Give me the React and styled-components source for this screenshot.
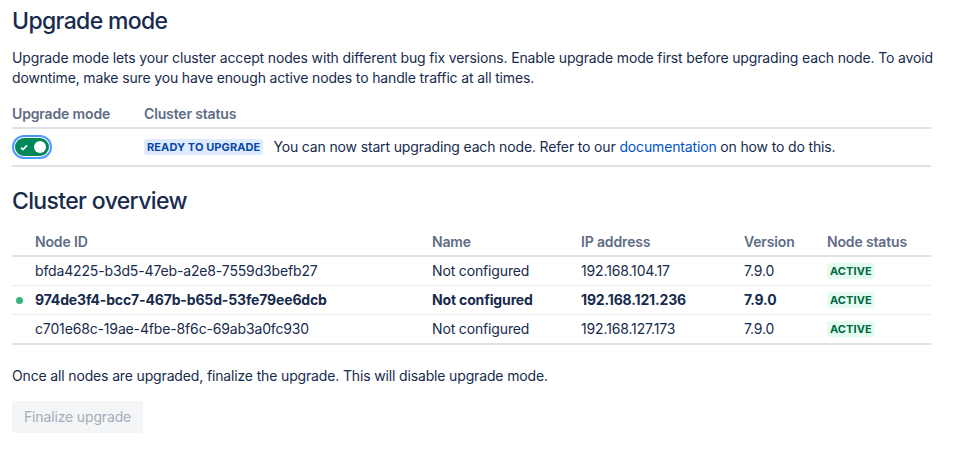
import styled, { createGlobalStyle } from "styled-components";

const GlobalStyle = createGlobalStyle`
  body {
    margin: 0;
    background: #fff;
    font-family: Inter, "Noto Sans", sans-serif;
    color: #172b4d;
    font-size: 14px;
    line-height: 20px;
    letter-spacing: -0.15px;
  }
`;

const Page = styled.div`
  padding: 7px 12px 20px;
`;

const Heading = styled.h2`
  margin: ${(p) => p.$margin || "0"};
  font-size: 23px;
  line-height: 28px;
  font-weight: 500;
  color: #172b4d;
  letter-spacing: -0.65px;
`;

const Text = styled.p`
  margin: ${(p) => p.$margin || "0"};
  max-width: 935px;
`;

const Link = styled.a`
  color: #0052cc;
  text-decoration: none;
`;

const Table = styled.div`
  width: 919px;
  margin-top: ${(p) => p.$top || "0"};
  display: grid;
  grid-template-columns: ${(p) => p.$columns};
  border-bottom: 2px solid #dfe1e6;
`;

const HeadCell = styled.div`
  padding: 0 0 3px;
  font-weight: 600;
  color: #5e6c84;
  border-bottom: 2px solid #dfe1e6;
`;

const Cell = styled.div`
  display: flex;
  align-items: center;
  padding: ${(p) => p.$pad || "4px 0"};
  font-weight: ${(p) => (p.$bold ? 700 : 400)};
  border-top: ${(p) => (p.$first ? "none" : "1px solid #ebecf0")};
  white-space: nowrap;
`;

const Toggle = styled.span`
  display: inline-flex;
  align-items: center;
  justify-content: space-between;
  box-sizing: border-box;
  width: 34px;
  height: 18px;
  margin-left: 3px;
  padding: 0 3px 0 5px;
  border-radius: 9px;
  background: #00875a;
  box-shadow: 0 0 0 1px #fff, 0 0 0 3px #4c9aff;
`;

const Knob = styled.span`
  width: 12px;
  height: 12px;
  border-radius: 50%;
  background: #fff;
`;

const Lozenge = styled.span`
  display: inline-block;
  padding: 0 3px;
  border-radius: 3px;
  font-size: 11px;
  line-height: 16px;
  font-weight: 700;
  text-transform: uppercase;
  letter-spacing: 0.1px;
  background: ${(p) => (p.$tone === "green" ? "#e3fcef" : "#deebff")};
  color: ${(p) => (p.$tone === "green" ? "#006644" : "#0747a6")};
  margin-right: ${(p) => p.$gap || "0"};
`;

const Dot = styled.span`
  width: 7px;
  height: 7px;
  margin-left: 4px;
  border-radius: 50%;
  background: #36b37e;
`;

const Button = styled.button`
  margin-top: 15px;
  height: 32px;
  padding: 0 12px;
  border: none;
  border-radius: 3px;
  background: #f4f5f7;
  color: #a5adba;
  font: inherit;
  letter-spacing: inherit;
  cursor: not-allowed;
`;

const nodes = [
  { id: "bfda4225-b3d5-47eb-a2e8-7559d3befb27", ip: "192.168.104.17" },
  { id: "974de3f4-bcc7-467b-b65d-53fe79ee6dcb", ip: "192.168.121.236", current: true },
  { id: "c701e68c-19ae-4fbe-8f6c-69ab3a0fc930", ip: "192.168.127.173" },
];

export default function App() {
  return (
    <Page>
      <GlobalStyle />
      <Heading>Upgrade mode</Heading>
      <Text $margin="13px 0 0">
        Upgrade mode lets your cluster accept nodes with different bug fix versions. Enable upgrade
        mode first before upgrading each node. To avoid downtime, make sure you have enough active
        nodes to handle traffic at all times.
      </Text>

      <Table $top="16px" $columns="132px 1fr">
        <HeadCell>Upgrade mode</HeadCell>
        <HeadCell>Cluster status</HeadCell>
        <Cell $first $pad="8px 0">
          <Toggle>
            <svg width="8" height="7" viewBox="0 0 8 7">
              <path d="M1 3.6 L3 5.5 L7 1.3" fill="none" stroke="#fff" strokeWidth="1.7" />
            </svg>
            <Knob />
          </Toggle>
        </Cell>
        <Cell $first $pad="8px 0">
          <Lozenge $gap="10px">Ready to upgrade</Lozenge>
          You can now start upgrading each node. Refer to our&nbsp;<Link href="#">documentation</Link>
          &nbsp;on how to do this.
        </Cell>
      </Table>

      <Heading $margin="20px 0 0">Cluster overview</Heading>
      <Table $top="17px" $columns="23px 397px 149px 163px 83px 1fr">
        <HeadCell />
        <HeadCell>Node ID</HeadCell>
        <HeadCell>Name</HeadCell>
        <HeadCell>IP address</HeadCell>
        <HeadCell>Version</HeadCell>
        <HeadCell>Node status</HeadCell>
        {nodes.map((n, i) => [
          <Cell key={n.id + "d"} $first={i === 0}>{n.current && <Dot />}</Cell>,
          <Cell key={n.id + "i"} $first={i === 0} $bold={n.current}>{n.id}</Cell>,
          <Cell key={n.id + "n"} $first={i === 0} $bold={n.current}>Not configured</Cell>,
          <Cell key={n.id + "p"} $first={i === 0} $bold={n.current}>{n.ip}</Cell>,
          <Cell key={n.id + "v"} $first={i === 0} $bold={n.current}>7.9.0</Cell>,
          <Cell key={n.id + "s"} $first={i === 0}>
            <Lozenge $tone="green">Active</Lozenge>
          </Cell>,
        ])}
      </Table>

      <Text $margin="21px 0 0">
        Once all nodes are upgraded, finalize the upgrade. This will disable upgrade mode.
      </Text>
      <Button disabled>Finalize upgrade</Button>
    </Page>
  );
}
